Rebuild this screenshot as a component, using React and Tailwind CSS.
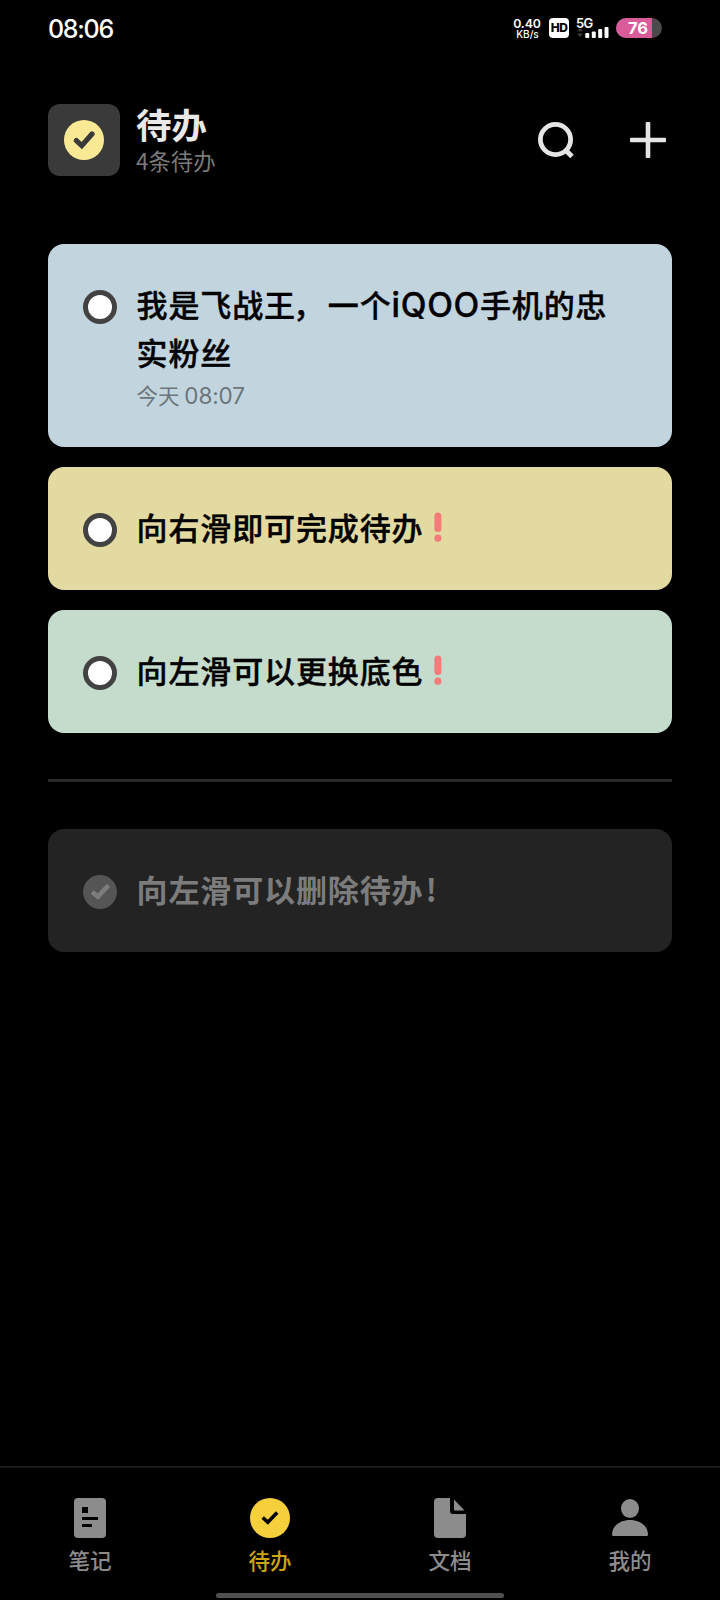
import React from "react";

function StatusBar() {
  return (
    <div className="flex h-14 items-start pl-12 pr-[58px] pt-[18px] text-white">
      <span className="mt-px font-[Inter] text-[25px]/[21px] font-medium tracking-[-1.3px]">08:06</span>
      <div className="ml-auto flex items-start">
        <div className="flex w-8 flex-col items-center font-[Inter] font-semibold">
          <span className="text-[12.3px]/[11px] tracking-[-0.1px]">0.40</span>
          <span className="ml-px text-[10px]/[10px] font-medium">KB/s</span>
        </div>
        <div className="ml-1.5 flex h-5 w-5 items-center justify-center rounded-[4px] bg-white font-[Inter] text-[12px]/[20px] font-extrabold tracking-[-0.6px] text-black">HD</div>
        <div className="ml-2 flex w-8 flex-col font-[Inter]">
          <span className="-ml-px text-[13px]/[11px] font-semibold tracking-[-0.8px]">5G</span>
          <svg className="-mt-0.5 h-[11px] w-8" viewBox="0 0 32 11">
            <path d="M0 4.3L3 1L6 4.3zM0 6.5h6L3 10z" fill="#3d3d3d" />
            <rect x="8.3" y="6" width="4" height="5" rx="1" fill="#fff" />
            <rect x="14.8" y="4.5" width="4" height="6.5" rx="1" fill="#fff" />
            <rect x="21.2" y="2" width="4" height="9" rx="1" fill="#fff" />
            <rect x="27.5" y="0" width="4" height="11" rx="1" fill="#fff" />
          </svg>
        </div>
        <div className="ml-[7px] flex h-5 w-[46px] items-center overflow-hidden rounded-full bg-[#4a4a4a]">
          <div className="flex h-full w-9 items-center justify-end bg-[#d95b99] pr-1 pb-px font-[Inter] text-[16.5px]/[18px] font-bold">76</div>
        </div>
      </div>
    </div>
  );
}

function Header() {
  return (
    <header className="mt-12 flex h-[72px] items-center px-12">
      <div className="flex h-[72px] w-[72px] items-center justify-center rounded-xl bg-[#3a3a3a]">
        <svg className="h-10 w-10" viewBox="-20 -20 40 40">
          <circle r="20" fill="#fae994" />
          <path d="M-7.6 0.6L-2.2 5.6L8 -6" fill="none" stroke="#3a3a3a" strokeWidth="5.2" strokeLinecap="round" />
        </svg>
      </div>
      <div className="-mt-[3px] ml-4 flex flex-col">
        <h1 className="text-[35.5px]/[42px] font-bold text-[#e8e8e8]">待办</h1>
        <p className="text-[22.4px]/[30px] text-[#7b7b7b]">4条待办</p>
      </div>
      <svg className="ml-auto h-10 w-10" viewBox="0 0 40 40" fill="none" stroke="#e5e5e5">
        <circle cx="20.5" cy="19.5" r="15.1" strokeWidth="4.8" />
        <path d="M31 30.5L37 36.5" strokeWidth="5" />
      </svg>
      <svg className="ml-[55px] mr-1.5 h-9 w-9" viewBox="0 0 36 36" fill="#e5e5e5">
        <rect x="15.7" width="4.6" height="36" rx="1" />
        <rect y="15.7" width="36" height="4.6" rx="1" />
      </svg>
    </header>
  );
}

function Ring() {
  return <span className="mt-[46px] h-[34px] w-[34px] shrink-0 rounded-full border-[5px] border-[#424242] bg-white" />;
}

function Alert() {
  return (
    <svg className="ml-[10.5px] mt-[45px] h-[30px] w-2" viewBox="0 0 8 30" fill="#f57b7b">
      <rect x="0.4" y="0.5" width="7" height="19.5" rx="3.5" />
      <circle cx="3.9" cy="26.2" r="3.6" />
    </svg>
  );
}

function Todo({ color, children, alert }) {
  return (
    <li className={`flex h-[123px] items-start rounded-2xl pl-[35px] ${color}`}>
      <Ring />
      <p className="ml-[19.5px] mt-9 text-[31px]/[47px] font-medium tracking-[0.88px] text-black [-webkit-text-stroke:0.4px_black]">{children}</p>
      {alert && <Alert />}
    </li>
  );
}

function Tab({ label, tone, children }) {
  return (
    <button className={`flex flex-1 flex-col items-center pt-[30px] ${tone}`}>
      <svg className="h-10 w-10" viewBox="0 0 40 40" fill="currentColor">{children}</svg>
      <span className="mt-[7px] text-[21.5px]/[30px] font-medium">{label}</span>
    </button>
  );
}

export default function App() {
  return (
    <div className="flex h-[1600px] w-[720px] flex-col overflow-hidden bg-black font-['Noto_Sans_CJK_SC',sans-serif]">
      <StatusBar />
      <Header />
      <main className="mt-[68px] flex flex-1 flex-col px-12">
        <ul className="flex flex-col gap-5">
          <li className="flex h-[203px] items-start rounded-2xl bg-[#c2d5df] pl-[35px]">
            <Ring />
            <div className="ml-[19.5px] mt-9 flex flex-col">
              <p className="whitespace-nowrap text-[31px]/[47.6px] font-medium tracking-[0.88px] text-black [-webkit-text-stroke:0.4px_black]">
                我是飞战王<span className="-ml-[3px] mr-[3px]">，</span>一个<span className="font-[Inter] text-[33.5px]/[30px] font-medium tracking-[0.7px]">iQOO</span>手机的忠
                <br />
                实粉丝
              </p>
              <p className="mt-[2px] text-[21.5px]/[36px] text-[#6b757b]">今天 <span className="font-[Inter] text-[22.5px]/[20px] tracking-[-0.1px]">08:07</span></p>
            </div>
          </li>
          <Todo color="bg-[#e3daa1]" alert>向右滑即可完成待办</Todo>
          <Todo color="bg-[#c5dccd]" alert>向左滑可以更换底色</Todo>
        </ul>
        <div className="mt-[46px] h-[3px] bg-[#2a2a2a]" />
        <div className="mt-[47px] flex h-[123px] items-start rounded-2xl bg-[#232323] pl-[35px]">
          <svg className="mt-[46px] h-[34px] w-[34px]" viewBox="-17 -17 34 34">
            <circle r="17" fill="#555" />
            <path d="M-7.8 0.2L-2 4.6L8.4 -6.6" fill="none" stroke="#7d7d7d" strokeWidth="4.6" />
          </svg>
          <p className="ml-[19.5px] mt-9 text-[31px]/[47px] font-bold tracking-[0.88px] text-[#7c7c7c]">向左滑可以删除待办<span className="ml-[2px]">!</span></p>
        </div>
      </main>
      <nav className="flex h-[127px] border-t-2 border-[#191919]">
        <Tab label="笔记" tone="text-[#8c8c8c]">
          <rect x="4" width="32" height="40" rx="4" />
          <path d="M12 9h6v6h-6zM12 19h16v3H12zM12 26h10v3H12z" fill="#000" />
        </Tab>
        <Tab label="待办" tone="text-[#cda416]">
          <circle cx="20" cy="20" r="20" fill="#f6cf3d" />
          <path d="M12.7 19.5L17.8 24.2L27.2 14.5" fill="none" stroke="#000" strokeWidth="3.6" />
        </Tab>
        <Tab label="文档" tone="text-[#8c8c8c]">
          <path d="M8 0H20V13Q20 16 23 16H36V36Q36 40 32 40H8Q4 40 4 36V4Q4 0 8 0z" />
          <path d="M24 1.5L34.6 12.5H24z" />
        </Tab>
        <Tab label="我的" tone="text-[#8c8c8c]">
          <ellipse cx="20" cy="10.5" rx="9" ry="9.5" />
          <path d="M2 36.5C2 28 10 22 20 22S38 28 38 36.5Q38 38 36.5 38H3.5Q2 38 2 36.5z" />
        </Tab>
      </nav>
      <div className="h-[7px] shrink-0 pl-[216px]">
        <div className="h-[5px] w-72 rounded-full bg-[#505050]" />
      </div>
    </div>
  );
}
